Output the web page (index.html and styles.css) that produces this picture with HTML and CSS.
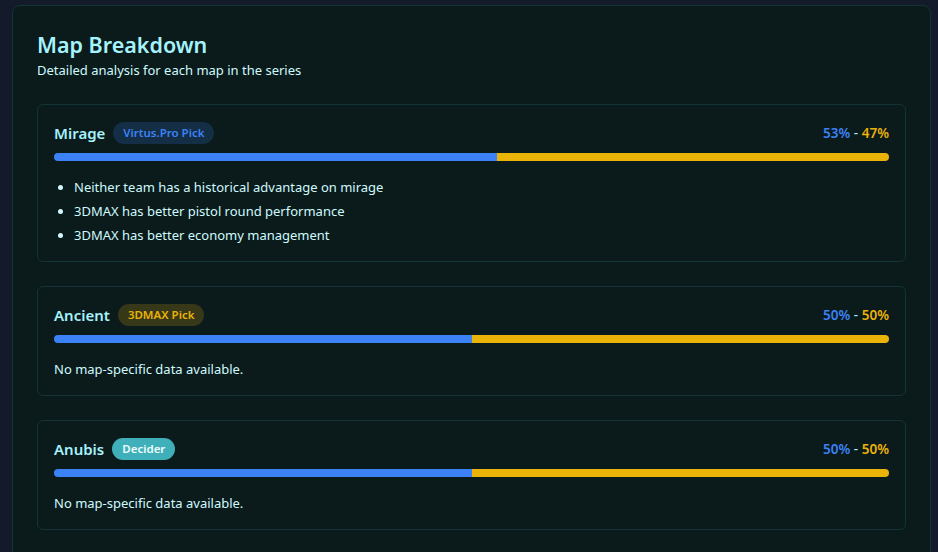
FILE: index.html
```html
<!DOCTYPE html>
<html>
<head>
<meta charset="utf-8">
<link rel="stylesheet" href="styles.css">
</head>
<body>
<section class="panel">
  <h2 class="title">Map Breakdown</h2>
  <p class="subtitle">Detailed analysis for each map in the series</p>

  <div class="maps">
    <div class="map">
      <div class="map-head">
        <div class="map-name">
          <span class="name">Mirage</span>
          <span class="badge badge-blue">Virtus.Pro Pick</span>
        </div>
        <div class="pct"><span class="blue">53%</span> <span class="dash">-</span> <span class="yellow">47%</span></div>
      </div>
      <div class="bar"><div class="bar-a" style="width:53%"></div><div class="bar-b"></div></div>
      <ul class="notes">
        <li>Neither team has a historical advantage on mirage</li>
        <li>3DMAX has better pistol round performance</li>
        <li>3DMAX has better economy management</li>
      </ul>
    </div>

    <div class="map">
      <div class="map-head">
        <div class="map-name">
          <span class="name">Ancient</span>
          <span class="badge badge-yellow">3DMAX Pick</span>
        </div>
        <div class="pct"><span class="blue">50%</span> <span class="dash">-</span> <span class="yellow">50%</span></div>
      </div>
      <div class="bar"><div class="bar-a" style="width:50%"></div><div class="bar-b"></div></div>
      <p class="empty">No map-specific data available.</p>
    </div>

    <div class="map">
      <div class="map-head">
        <div class="map-name">
          <span class="name">Anubis</span>
          <span class="badge badge-teal">Decider</span>
        </div>
        <div class="pct"><span class="blue">50%</span> <span class="dash">-</span> <span class="yellow">50%</span></div>
      </div>
      <div class="bar"><div class="bar-a" style="width:50%"></div><div class="bar-b"></div></div>
      <p class="empty">No map-specific data available.</p>
    </div>
  </div>
</section>
</body>
</html>
```

FILE: styles.css
```css
html, body {
  margin: 0;
  padding: 0;
}
body {
  background: #131a2a;
  font-family: "Noto Sans", "Open Sans", sans-serif;
  color: #cffafe;
  padding: 5px 7px 0 12px;
  height: 552px;
  box-sizing: border-box;
  overflow: hidden;
}
.panel {
  background: #0b1a1b;
  border: 1px solid #133436;
  border-radius: 8px;
  padding: 24px;
  min-height: 600px;
}
.title {
  margin: 0;
  font-size: 21.5px;
  font-weight: 600;
  color: #a5f3fc;
  line-height: 30px;
}
.subtitle {
  margin: 0;
  font-size: 13px;
  line-height: 20px;
  color: #cffafe;
}
.maps {
  margin-top: 24px;
  display: flex;
  flex-direction: column;
  gap: 24px;
}
.map {
  border: 1px solid #133436;
  border-radius: 6px;
  padding: 16px;
}
.map-head {
  display: flex;
  justify-content: space-between;
  align-items: center;
  height: 24px;
}
.map-name {
  display: flex;
  align-items: center;
  gap: 8px;
}
.name {
  font-size: 15px;
  font-weight: 600;
  color: #a5f3fc;
}
.badge {
  font-size: 11.5px;
  font-weight: 600;
  padding: 3px 10px;
  border-radius: 999px;
  line-height: 16px;
}
.badge-blue { background: rgba(59,130,246,0.2); color: #3b82f6; }
.badge-yellow { background: rgba(234,179,8,0.2); color: #eab308; }
.badge-teal { background: #3fb0b9; color: #f0fdff; }
.pct {
  font-size: 13.5px;
  font-weight: 600;
}
.blue { color: #3b82f6; }
.yellow { color: #eab308; }
.dash { color: #a5f3fc; font-weight: 400; }
.bar {
  margin-top: 8px;
  height: 8px;
  border-radius: 4px;
  overflow: hidden;
  display: flex;
}
.bar-a { background: #3b82f6; }
.bar-b { background: #eab308; flex: 1; }
.notes {
  margin: 16px 0 0 0;
  padding-left: 20px;
  font-size: 13px;
  line-height: 20px;
  display: flex;
  flex-direction: column;
  gap: 4px;
}
.notes li::marker { color: #cffafe; }
.empty {
  margin: 16px 0 0 0;
  font-size: 13px;
  line-height: 20px;
}
```
